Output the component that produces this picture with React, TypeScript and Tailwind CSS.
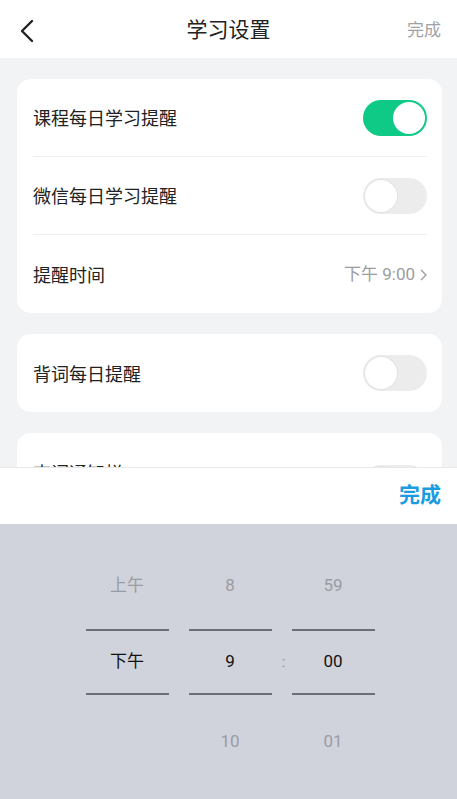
import React from 'react';

const font = { fontFamily: 'Roboto, "Noto Sans CJK SC", "Noto Sans", sans-serif' };

const Toggle: React.FC<{ on?: boolean }> = ({ on }) => (
  <div
    className={`w-[64px] h-[36px] rounded-full p-[2px] flex ${
      on ? 'bg-[#0fc987] justify-end' : 'bg-[#ececec] justify-start'
    }`}
  >
    <div
      className={`w-[32px] h-[32px] rounded-full bg-white ${
        on ? '' : 'shadow-[0_0_0_1px_#e2e2e2]'
      }`}
    />
  </div>
);

const Row: React.FC<{ label: string; last?: boolean; children?: React.ReactNode }> = ({
  label,
  last,
  children,
}) => (
  <div className={`h-[78px] flex items-center justify-between ${last ? '' : 'border-b border-[#efefef]'}`}>
    <span className="text-[18px] text-[#222] pt-[2px]">{label}</span>
    {children}
  </div>
);

const Wheel: React.FC<{ top: string; mid: string; bottom: string }> = ({ top, mid, bottom }) => (
  <div className="w-[83px] flex flex-col items-center">
    <div className="h-[105px] flex items-end pb-[31px] text-[17px] text-[#9a9ca3]">{top}</div>
    <div className="w-full h-[66px] border-y-2 border-[#6d6f75] flex items-center justify-center text-[17px] text-[#111]">
      {mid}
    </div>
    <div className="pt-[34px] text-[17px] text-[#9a9ca3]">{bottom}</div>
  </div>
);

export default function App() {
  return (
    <div className="relative w-[457px] h-[799px] overflow-hidden bg-[#f2f3f5]" style={font}>
      <div className="h-[58px] bg-white flex items-center px-[16px] pt-[3px]">
        <div className="w-[60px] flex items-center">
          <svg width="18" height="24" viewBox="0 0 18 24" className="ml-[2px]">
            <path d="M14 2 L4 12 L14 22" fill="none" stroke="#222" strokeWidth="2.4" strokeLinecap="round" strokeLinejoin="round" />
          </svg>
        </div>
        <span className="flex-1 text-center text-[21px] text-[#222]">学习设置</span>
        <span className="w-[60px] text-right text-[17px] text-[#a2a2a6]">完成</span>
      </div>

      <div className="ml-[17px] mr-[15px] pt-[21px] flex flex-col gap-[21px]">
        <div className="bg-white rounded-[14px] pl-[16px] pr-[15px]">
          <Row label="课程每日学习提醒">
            <Toggle on />
          </Row>
          <Row label="微信每日学习提醒">
            <Toggle />
          </Row>
          <Row label="提醒时间" last>
            <span className="flex items-center gap-[5px] text-[17px] text-[#9c9ca0] pt-[2px]">
              下午 9:00
              <svg width="7" height="12" viewBox="0 0 7 12">
                <path d="M1 1 L6 6 L1 11" fill="none" stroke="#9c9ca0" strokeWidth="1.4" />
              </svg>
            </span>
          </Row>
        </div>
        <div className="bg-white rounded-[14px] pl-[16px] pr-[15px]">
          <Row label="背词每日提醒" last>
            <Toggle />
          </Row>
        </div>
        <div className="bg-white rounded-[14px] pl-[16px] pr-[15px]">
          <Row label="查词通知栏" last>
            <div className="mt-[22px]">
              <Toggle />
            </div>
          </Row>
        </div>
      </div>

      <div className="absolute left-0 right-0 bottom-0 top-[467px] flex flex-col">
        <div className="h-[57px] bg-white border-t border-[#e8e8e8] flex items-center justify-end px-[16px]">
          <span className="text-[21px] font-bold text-[#1a9ce2]">完成</span>
        </div>
        <div className="flex-1 bg-[#d1d3dc] flex justify-center gap-[20px] pl-[3px]">
          <Wheel top="上午" mid="下午" bottom="" />
          <div className="relative">
            <Wheel top="8" mid="9" bottom="10" />
            <span className="absolute right-[-14px] top-[127px] text-[15px] text-[#8a8c92]">:</span>
          </div>
          <Wheel top="59" mid="00" bottom="01" />
        </div>
      </div>
    </div>
  );
}
